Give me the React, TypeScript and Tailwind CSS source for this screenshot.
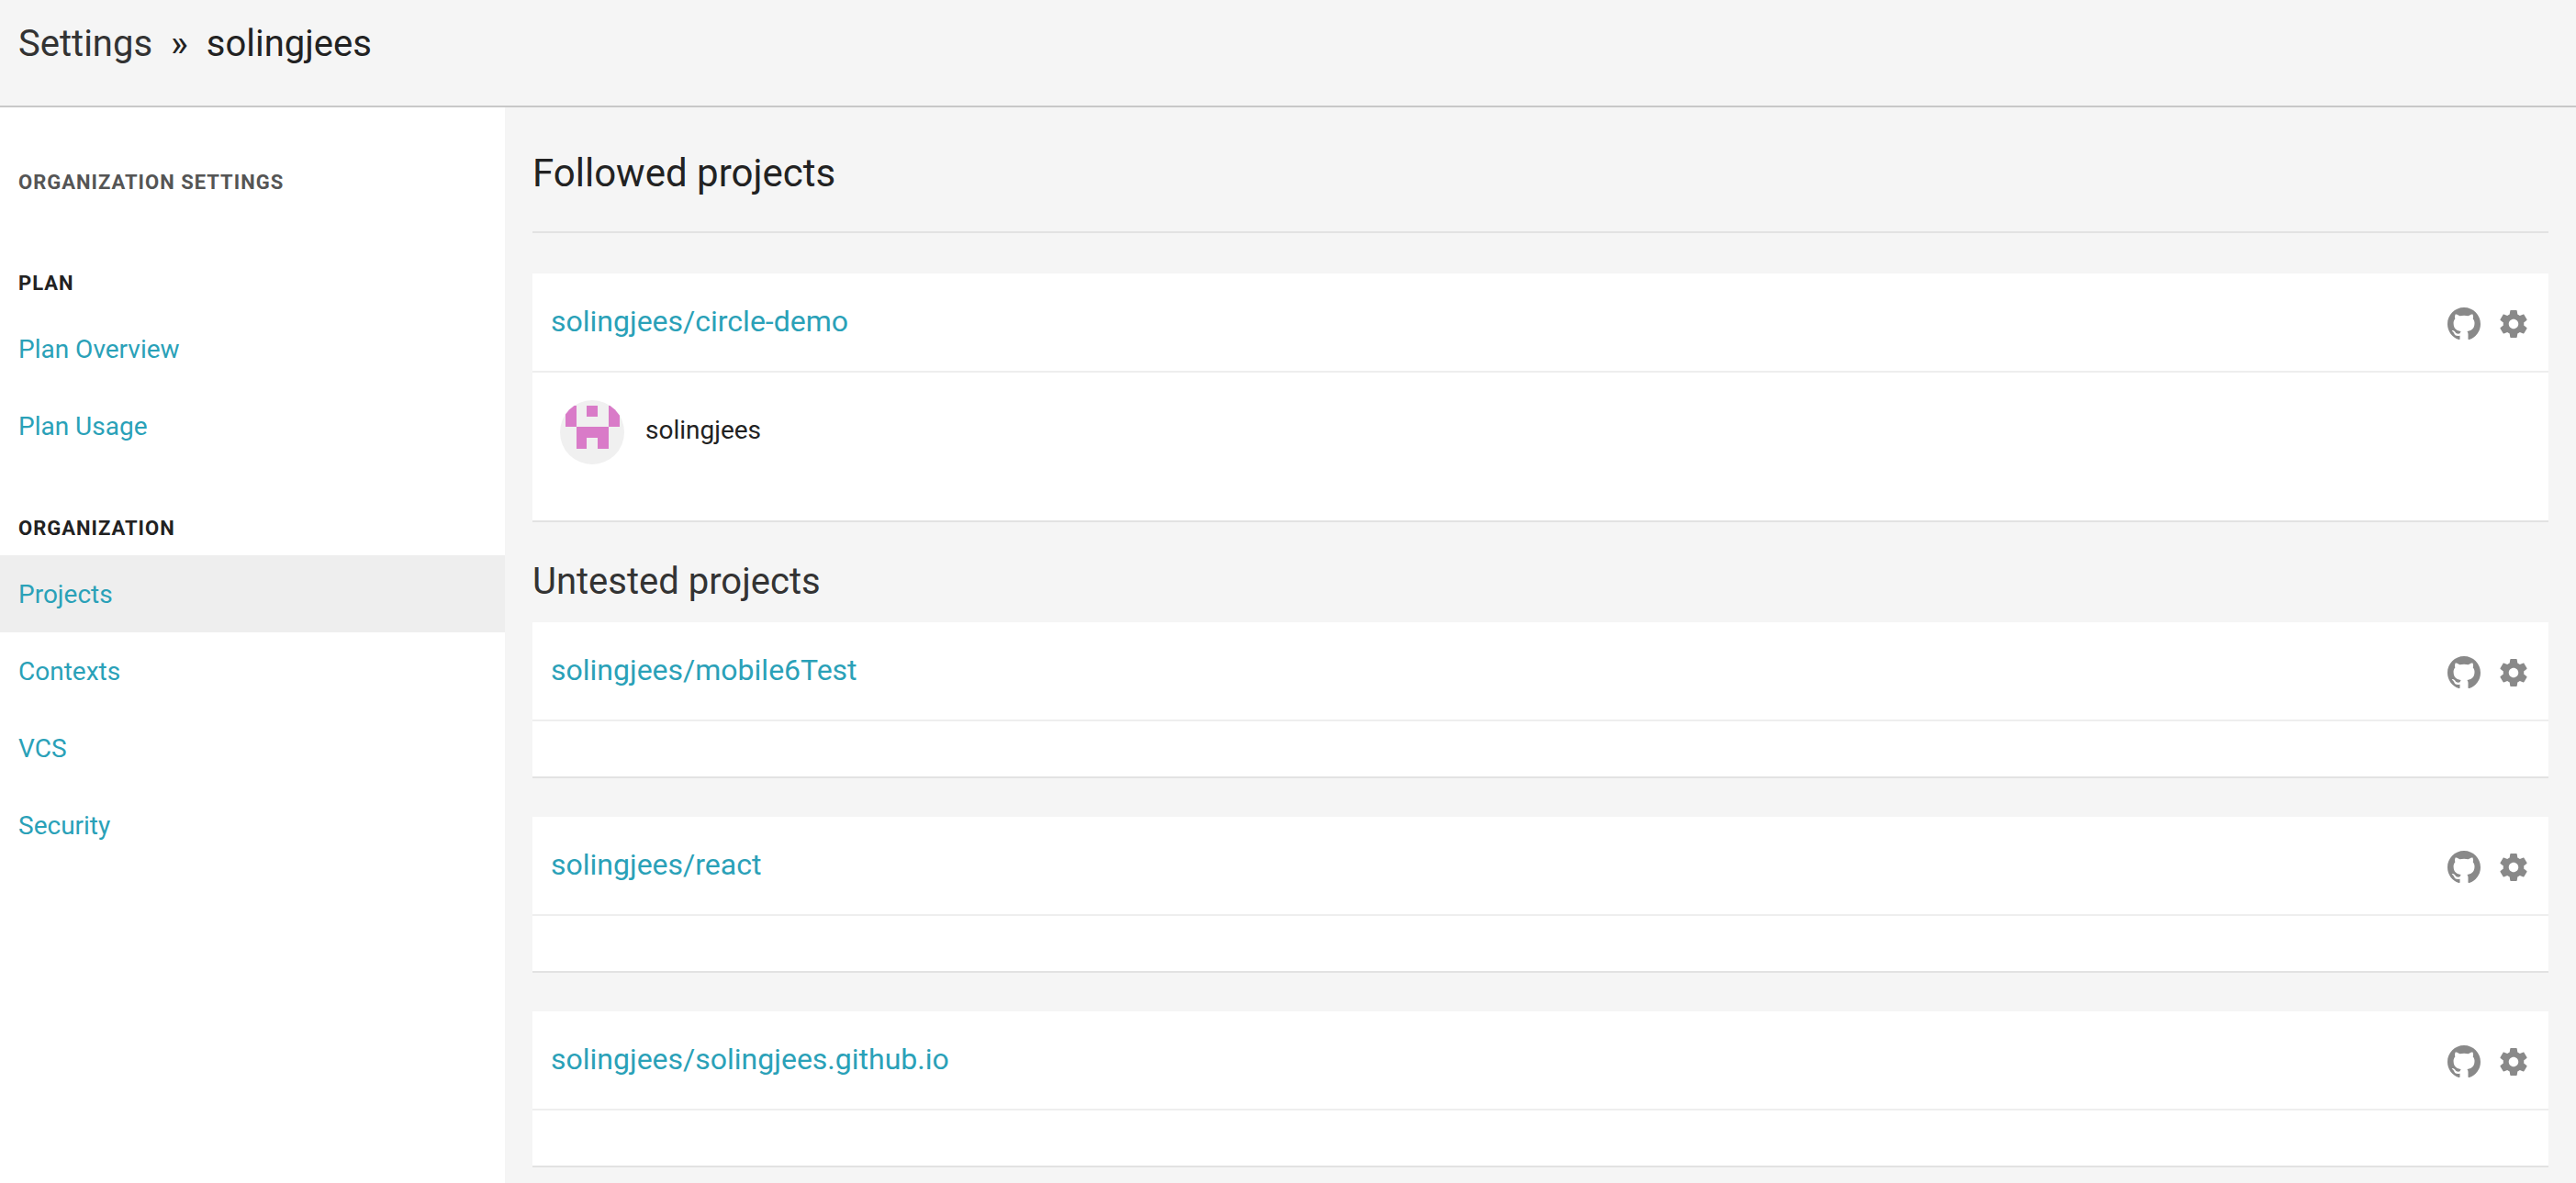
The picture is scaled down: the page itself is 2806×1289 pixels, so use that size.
import React from "react";

const plan = ["Plan Overview", "Plan Usage"];
const organization = ["Projects", "Contexts", "VCS", "Security"];
const untested = ["mobile6Test", "react", "solingjees.github.io"];

function GithubIcon() {
  return (
    <svg viewBox="0 0 16 16" className="size-9" fill="currentColor" aria-hidden="true">
      <path d="M8 0C3.58 0 0 3.58 0 8c0 3.54 2.29 6.53 5.47 7.59.4.07.55-.17.55-.38 0-.19-.01-.82-.01-1.49-2.01.37-2.53-.49-2.69-.94-.09-.23-.48-.94-.82-1.13-.28-.15-.68-.52-.01-.53.63-.01 1.08.58 1.23.82.72 1.21 1.87.87 2.33.66.07-.52.28-.87.51-1.07-1.78-.2-3.64-.89-3.64-3.95 0-.87.31-1.59.82-2.15-.08-.2-.36-1.02.08-2.12 0 0 .67-.21 2.2.82.64-.18 1.32-.27 2-.27s1.36.09 2 .27c1.53-1.04 2.2-.82 2.2-.82.44 1.1.16 1.92.08 2.12.51.56.82 1.27.82 2.15 0 3.07-1.87 3.75-3.65 3.95.29.25.54.73.54 1.48 0 1.07-.01 1.93-.01 2.2 0 .21.15.46.55.38A8.01 8.01 0 0 0 16 8c0-4.42-3.58-8-8-8z" />
    </svg>
  );
}

function GearIcon() {
  return (
    <svg viewBox="0 0 24 24" className="size-9" fill="currentColor" aria-hidden="true">
      <path d="M19.43 12.98c.04-.32.07-.64.07-.98s-.03-.66-.07-.98l2.11-1.65c.19-.15.24-.42.12-.64l-2-3.46c-.12-.22-.39-.3-.61-.22l-2.49 1c-.52-.4-1.08-.73-1.69-.98l-.38-2.65C14.46 2.18 14.25 2 14 2h-4c-.25 0-.46.18-.49.42l-.38 2.65c-.61.25-1.17.59-1.69.98l-2.49-1c-.23-.09-.49 0-.61.22l-2 3.46c-.13.22-.07.49.12.64l2.11 1.65c-.04.32-.07.65-.07.98s.03.66.07.98l-2.11 1.65c-.19.15-.24.42-.12.64l2 3.46c.12.22.39.3.61.22l2.49-1c.52.4 1.08.73 1.69.98l.38 2.65c.03.24.24.42.49.42h4c.25 0 .46-.18.49-.42l.38-2.65c.61-.25 1.17-.59 1.69-.98l2.49 1c.23.09.49 0 .61-.22l2-3.46c.12-.22.07-.49-.12-.64l-2.11-1.65zM12 15.5c-1.93 0-3.5-1.57-3.5-3.5s1.57-3.5 3.5-3.5 3.5 1.57 3.5 3.5-1.57 3.5-3.5 3.5z" />
    </svg>
  );
}

function Avatar() {
  return (
    <svg viewBox="0 0 70 70" className="size-[70px] rounded-full bg-[#f0f0f0]" aria-hidden="true">
      <g fill="#d97bc8" shapeRendering="crispEdges">
        <rect x="6" y="6" width="12" height="23" />
        <rect x="29" y="6" width="12" height="12" />
        <rect x="53" y="6" width="12" height="23" />
        <path d="M18 29h35v24H41V41H29v12H18z" />
      </g>
    </svg>
  );
}

function NavGroup({ title, items, active }: { title: string; items: string[]; active?: string }) {
  return (
    <section>
      <h3 className="px-5 pt-14 pb-[15px] text-[22px] leading-7 font-bold tracking-[1px] text-[#222]">{title}</h3>
      <ul>
        {items.map((item) => (
          <li key={item}>
            <a
              href="#"
              aria-current={item === active ? "page" : undefined}
              className="block px-5 pt-[25px] pb-[23px] text-[28px] leading-9 text-[#2aa1b8] aria-[current=page]:bg-[#eee]"
            >
              {item}
            </a>
          </li>
        ))}
      </ul>
    </section>
  );
}

function ProjectCard({ name, children }: { name: string; children?: React.ReactNode }) {
  return (
    <article className="border-b-2 border-[#e2e2e2] bg-white">
      <div className="flex items-start justify-between border-b-2 border-[#eee] px-5 pt-8 pb-[33px]">
        <a href="#" className="text-[32px] leading-10 text-[#2aa1b8]">
          solingjees/{name}
        </a>
        <div className="flex gap-[18px] pt-[5px] text-[#898989]">
          <a href="#" aria-label={`${name} on GitHub`}>
            <GithubIcon />
          </a>
          <a href="#" aria-label={`${name} settings`}>
            <GearIcon />
          </a>
        </div>
      </div>
      <div className="min-h-[60px] px-[30px]">{children}</div>
    </article>
  );
}

export default function App() {
  return (
    <div className="flex min-h-screen flex-col bg-[#f5f5f5] font-['Roboto',sans-serif] text-[#222]">
      <header className="border-b-2 border-[#c8c8c8] px-5 pt-6 pb-[43px]">
        <nav aria-label="Breadcrumb" className="flex gap-5 text-[40px] leading-12">
          <a href="#" className="text-[#333]">Settings</a>
          <span>»</span>
          <span>solingjees</span>
        </nav>
      </header>
      <div className="flex flex-1">
        <aside className="w-[550px] shrink-0 bg-white">
          <h2 className="px-5 pt-[68px] pb-[26px] text-[22px] leading-7 font-bold tracking-[1px] text-[#555]">
            ORGANIZATION SETTINGS
          </h2>
          <NavGroup title="PLAN" items={plan} />
          <NavGroup title="ORGANIZATION" items={organization} active="Projects" />
        </aside>
        <main className="min-w-0 flex-1 px-[30px]">
          <h1 className="border-b-2 border-[#e2e2e2] pt-12 pb-[39px] text-[42px] leading-12">Followed projects</h1>
          <div className="pt-11">
            <ProjectCard name="circle-demo">
              <div className="flex items-center gap-[23px] pt-[30px] pb-[61px]">
                <Avatar />
                <span className="pb-1 text-[28px] leading-8">solingjees</span>
              </div>
            </ProjectCard>
          </div>
          <h2 className="pt-[41px] pb-5 text-[40px] leading-12 text-[#333]">Untested projects</h2>
          <div className="flex flex-col gap-[42px]">
            {untested.map((name) => (
              <ProjectCard key={name} name={name} />
            ))}
          </div>
        </main>
      </div>
    </div>
  );
}
